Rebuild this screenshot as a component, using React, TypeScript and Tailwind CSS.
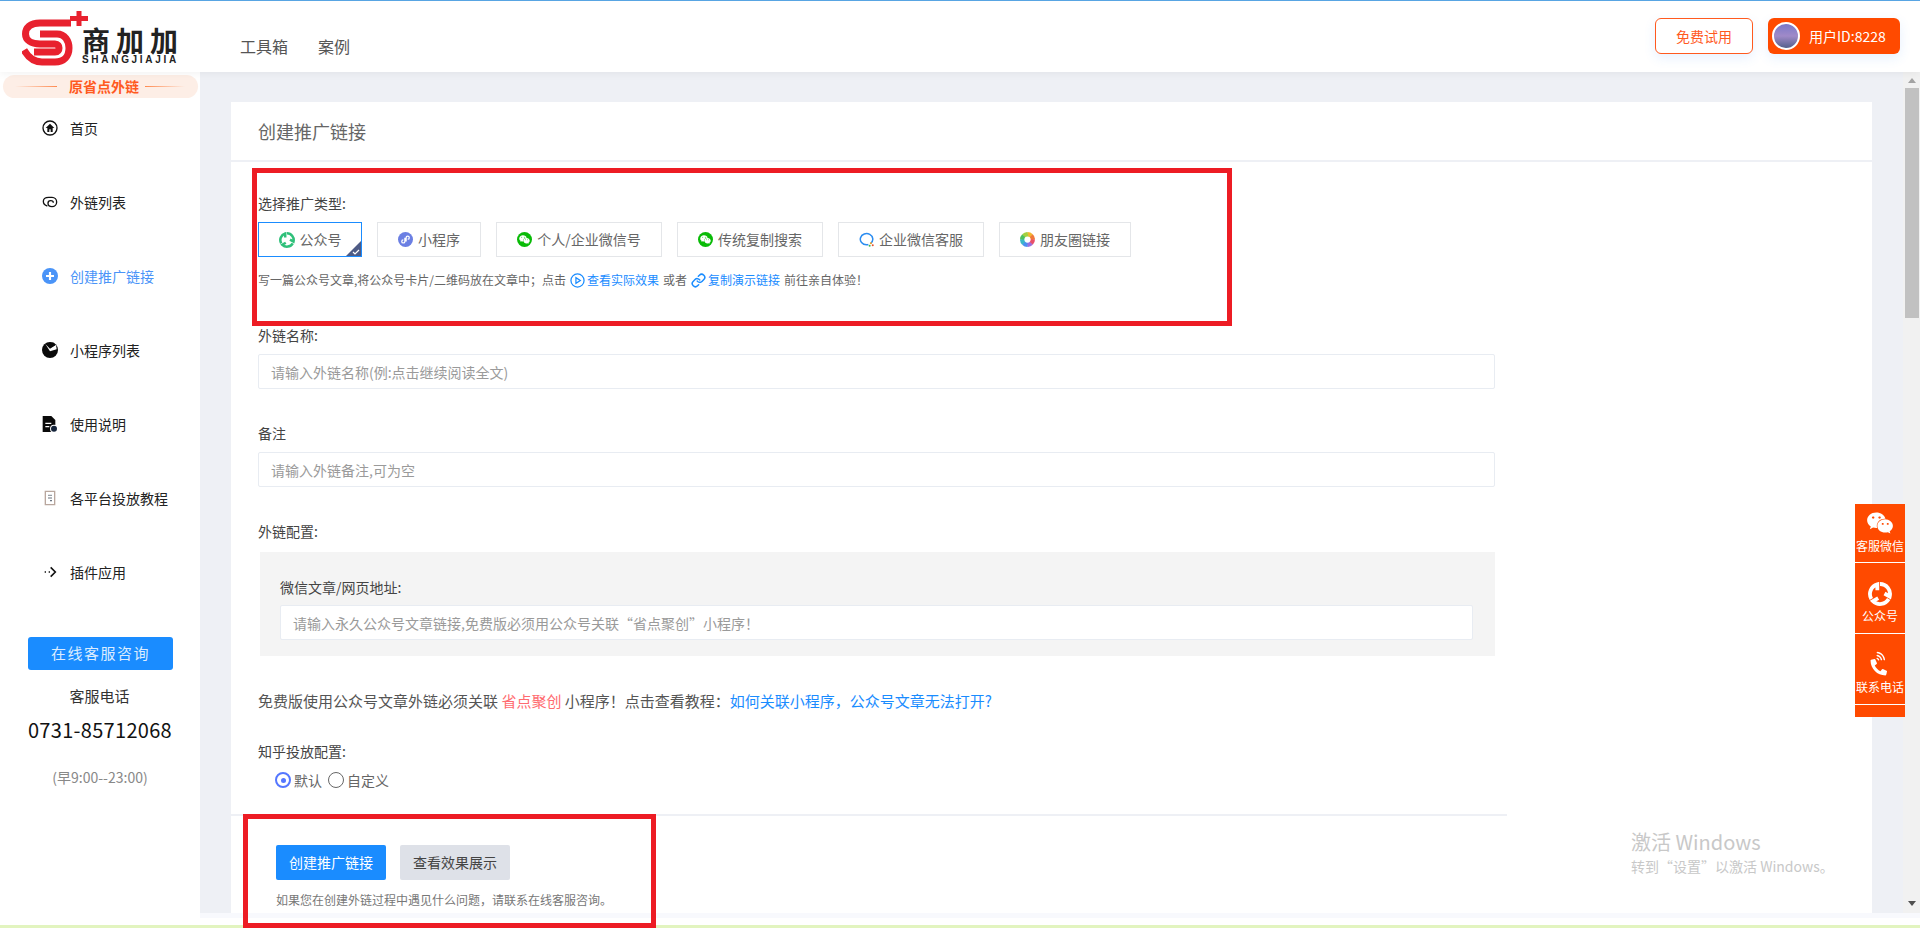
import { Link as LinkIcon } from "lucide-react"
import { FaWeixin, FaPhoneVolume } from "react-icons/fa"

function RingIcon({ color, size = 16 }: { color: string; size?: number }) {
  return (
    <svg width={size} height={size} viewBox="0 0 24 24" fill="none" stroke={color} strokeWidth="3.800">
      {[0, 120, 240].map((r) => (
        <path key={r} d="M12 2A10 10 0 0 1 21.700 14.500L16.500 11.500" transform={`rotate(${r} 12 12)`} />
      ))}
    </svg>
  )
}

function WechatCircle() {
  return (
    <span className="flex h-[15px] w-[15px] items-center justify-center rounded-full bg-[#09bb07]">
      <FaWeixin className="h-[11px] w-[11px] text-white" />
    </span>
  )
}

function MiniIcon() {
  return (
    <svg width="15" height="15" viewBox="0 0 24 24">
      <circle cx="12" cy="12" r="12" fill="#6b7fe3" />
      <path d="M11 9v6a2.500 2.500 0 1 1-2.500-2.500M13 15V9a2.500 2.500 0 1 1 2.500 2.500" fill="none" stroke="#fff" strokeWidth="2" />
    </svg>
  )
}

function QyIcon() {
  return (
    <svg width="15" height="15" viewBox="0 0 24 24" fill="none">
      <path d="M19 18A10 9 0 1 0 12 20.500c1 0 2-.1 3-.4" stroke="#2b8cf0" strokeWidth="2.400" />
      <circle cx="19" cy="18" r="1.600" fill="#f0a020" />
      <circle cx="22" cy="21" r="1.600" fill="#e8502a" />
      <circle cx="17" cy="22" r="1.600" fill="#35b558" />
    </svg>
  )
}

function RainbowIcon() {
  const colors = ["#f2b632", "#f0793a", "#e8506a", "#9a6fe0", "#4a90f0", "#3bb8c8", "#4cc060", "#a4d040"]
  return (
    <svg width="15" height="15" viewBox="0 0 24 24">
      {colors.map((c, i) => (
        <path key={c} d="M12 0A12 12 0 0 1 20.500 3.500L15 12 12 7Z" fill={c} transform={`rotate(${i * 45} 12 12)`} />
      ))}
      <circle cx="12" cy="12" r="5" fill="#fff" />
    </svg>
  )
}

const navIcons = {
  home: (
    <svg width="16" height="16" viewBox="0 0 24 24">
      <circle cx="12" cy="12" r="10.500" fill="none" stroke="#111" strokeWidth="2" />
      <path d="M12 5.500 5.500 12H8v6h3v-4h2v4h3v-6h2.500z" fill="#111" />
    </svg>
  ),
  list: (
    <svg width="16" height="16" viewBox="0 0 24 24" fill="none" stroke="#111" strokeWidth="2">
      <path d="M8 18C4 17 2 14 2 11c0-4 4-6 8-6h5c4 0 7 3 7 7s-3 7-7 7c-4 0-6-2-6-5s2-4 4-4 4 1 4 3" />
    </svg>
  ),
  add: (
    <svg width="16" height="16" viewBox="0 0 24 24">
      <circle cx="12" cy="12" r="12" fill="#4a94f8" />
      <path d="M12 6v12M6 12h12" stroke="#fff" strokeWidth="3.200" />
    </svg>
  ),
  mini: (
    <svg width="16" height="16" viewBox="0 0 24 24">
      <circle cx="12" cy="12" r="12" fill="#0a0a0a" />
      <path d="M5 3l7 7 9-6 1 7-10 3Z" fill="#fff" />
      <path d="M11 1h7l2 4-8 4Z" fill="#0a0a0a" />
    </svg>
  ),
  doc: (
    <svg width="16" height="16" viewBox="0 0 24 24">
      <path d="M1 0h13l6 6v18H1z" fill="#0a0a0a" />
      <path d="M5 11h9M5 16h6" stroke="#fff" strokeWidth="2" />
      <circle cx="18" cy="19" r="6" fill="#fff" />
      <circle cx="18" cy="19" r="4.500" fill="#14233a" />
    </svg>
  ),
  guide: (
    <svg width="16" height="16" viewBox="0 0 24 24" fill="none" stroke="#b9a79e" strokeWidth="2">
      <path d="M5 2h14v20H5z" />
      <path d="M9 8h6M9 12h6" stroke="#9aa0a6" />
      <path d="M12 16h3" stroke="#6a7480" />
    </svg>
  ),
  plugin: (
    <svg width="16" height="16" viewBox="0 0 24 24" fill="none" stroke="#111" strokeWidth="2.400">
      <path d="M13 5l7 7-7 7" />
      <path d="M4 12h2M10 12h2" />
    </svg>
  ),
}

const navItems = [
  { label: "首页", icon: navIcons.home },
  { label: "外链列表", icon: navIcons.list },
  { label: "创建推广链接", icon: navIcons.add, active: true },
  { label: "小程序列表", icon: navIcons.mini },
  { label: "使用说明", icon: navIcons.doc },
  { label: "各平台投放教程", icon: navIcons.guide },
  { label: "插件应用", icon: navIcons.plugin },
]

const typeButtons = [
  { label: "公众号", icon: <RingIcon color="#2fc07a" />, w: "w-[104px]", selected: true },
  { label: "小程序", icon: <MiniIcon />, w: "w-[104px]" },
  { label: "个人/企业微信号", icon: <WechatCircle />, w: "w-[166px]" },
  { label: "传统复制搜索", icon: <WechatCircle />, w: "w-[146px]" },
  { label: "企业微信客服", icon: <QyIcon />, w: "w-[146px]" },
  { label: "朋友圈链接", icon: <RainbowIcon />, w: "w-[132px]" },
]

const inputClass =
  "block h-[35px] w-full rounded-[2px] border border-[#e8ecf2] bg-white px-3 text-[14px] text-[#333] outline-none placeholder:text-[#9a9a9a]"

function FormLabel({ children }: { children: React.ReactNode }) {
  return <div className="h-5 text-[14px] leading-5 text-[#444]">{children}</div>
}

export default function App() {
  return (
    <div className="relative flex h-[928px] w-[1920px] flex-col overflow-hidden bg-white [font-family:'Noto_Sans_CJK_SC','Noto_Sans',sans-serif]">
      <div className="h-px bg-[#5aa7e6]" />

      {/* Top bar */}
      <header className="relative z-10 flex h-[71px] shrink-0 items-start bg-white shadow-[0_2px_8px_rgba(0,0,0,0.05)]">
        <div className="ml-[22px] mt-[7px] flex w-[218px] items-start">
          <svg className="shrink-0" width="66" height="60" viewBox="0 0 66 60" fill="none" stroke="#e8212e" strokeWidth="7">
            <path d="M49 15H18C8 15 3.500 20 3.500 26C3.500 32 9 36 18 36H33C36 36 37 38 37 40C37 42 36 44 33 44H12" />
            <path d="M18 26H35C43 26 47 33 47 40C47 48 42 54 33 54H20C12 54 6 49 2 42" />
            <path d="M48 10.500H66M57 3V18" strokeWidth="5" />
          </svg>
          <div className="-ml-[6px] mt-[18px] w-[100px]">
            <div className="h-[29px] whitespace-nowrap text-[28px] font-bold leading-[29px] tracking-[6px] text-[#222]">商加加</div>
            <div className="h-[10px] whitespace-nowrap text-[10px] font-bold leading-[10px] tracking-[2.700px] text-[#222] [font-family:'Liberation_Sans',sans-serif]">
              SHANGJIAJIA
            </div>
          </div>
        </div>
        <nav className="mt-[35px] flex gap-[30px] text-[16px] leading-5 text-[#555]">
          <span>工具箱</span>
          <span>案例</span>
        </nav>
        <div className="ml-auto mr-[20px] mt-[17px] flex gap-[15px] text-[14px]">
          <span className="flex h-[36px] w-[98px] items-center justify-center rounded-[6px] border border-[#ff5a1f] bg-white text-[#ff5a1f] shadow-[0_4px_12px_rgba(60,140,255,0.12)]">
            免费试用
          </span>
          <span className="flex h-[36px] w-[132px] items-center rounded-[6px] bg-[#ff4a00] pl-1 text-white shadow-[0_4px_12px_rgba(60,140,255,0.12)]">
            <span className="h-7 w-7 rounded-full border-2 border-white bg-gradient-to-b from-[#7a78c8] via-[#a08ac8] to-[#55608c]" />
            <span className="ml-[9px]">用户ID:8228</span>
          </span>
        </div>
      </header>

      <div className="flex h-[853px] shrink-0">
        {/* Sidebar */}
        <aside className="flex w-[200px] shrink-0 flex-col bg-white">
          <div className="ml-[3px] mt-[3px] flex h-[23px] w-[195px] items-center rounded-full bg-[#fdeee6] pl-[12px] text-[14px] font-bold text-[#ff5a1f]">
            <span className="h-px w-[42px] bg-gradient-to-r from-transparent to-[#ff8a50]" />
            <span className="ml-[12px] leading-[23px]">原省点外链</span>
            <span className="ml-[6px] h-px w-[40px] bg-gradient-to-l from-transparent to-[#ff8a50]" />
          </div>
          <nav className="mt-[20px] flex flex-col gap-[54px] pl-[42px] text-[14px]">
            {navItems.map((item) => (
              <div key={item.label} className="flex h-5 items-center gap-[12px]">
                {item.icon}
                <span className={item.active ? "text-[#4a94f8]" : "text-[#222]"}>{item.label}</span>
              </div>
            ))}
          </nav>
          <div className="ml-[28px] mt-[55px] flex h-[33px] w-[145px] items-center justify-center rounded-[3px] bg-[#1a8cff] text-[15px] tracking-[1.500px] text-[#dcecff]">
            在线客服咨询
          </div>
          <div className="-ml-px mt-[16px] h-5 text-center text-[15px] leading-5 text-[#333]">客服电话</div>
          <div className="mt-[10px] h-7 text-center text-[20px] leading-7 tracking-[0.300px] text-[#111]">0731-85712068</div>
          <div className="mt-[23px] h-5 text-center text-[14px] leading-5 text-[#888]">(早9:00--23:00)</div>
        </aside>

        <div className="flex min-w-0 flex-1 flex-col">
          <div className="flex h-[841px] shrink-0">
            <main className="flex-1 bg-[#eef0f5] px-[31px] pt-[30px]">
              <section className="h-[811px] bg-white">
                <div className="h-[60px] border-b-2 border-[#eef0f5] pl-[27px] text-[18px] leading-[58px] text-[#666]">
                  创建推广链接
                </div>
                <div className="pl-[27px] pt-[31px]">
                  <FormLabel>选择推广类型:</FormLabel>
                  <div className="mt-[9px] flex gap-[15px]">
                    {typeButtons.map((b) => (
                      <div
                        key={b.label}
                        className={`relative flex h-[35px] items-center justify-center gap-[5px] border text-[14px] text-[#666] ${b.w} ${
                          b.selected ? "border-[#1a8cff]" : "border-[#e4e6e9]"
                        }`}
                      >
                        {b.icon}
                        {b.label}
                        {b.selected && (
                          <svg className="absolute bottom-0 right-0" width="15" height="15" viewBox="0 0 15 15">
                            <path d="M15 0v15H0z" fill="#4e5b85" />
                            <path d="M7 11l2 2 4-4" stroke="#fff" strokeWidth="1.200" fill="none" />
                          </svg>
                        )}
                      </div>
                    ))}
                  </div>
                  <div className="mt-[13px] flex h-5 items-center text-[12px] text-[#666]">
                    <span>写一篇公众号文章,将公众号卡片/二维码放在文章中；点击</span>
                    <svg className="ml-[4px]" width="15" height="15" viewBox="0 0 24 24" fill="none" stroke="#1a8cff" strokeWidth="2">
                      <circle cx="12" cy="12" r="10.500" />
                      <path d="M9.500 7.500v9l7-4.500z" />
                    </svg>
                    <span className="ml-[2px] text-[#1a8cff]">查看实际效果</span>
                    <span className="ml-1">或者</span>
                    <LinkIcon className="ml-1 h-[15px] w-[15px] text-[#1a8cff]" strokeWidth={2.4} />
                    <span className="ml-[2px] text-[#1a8cff]">复制演示链接</span>
                    <span className="ml-1">前往亲自体验！</span>
                  </div>

                  <div className="w-[1237px]">
                    <div className="mt-[35px]">
                      <FormLabel>外链名称:</FormLabel>
                    </div>
                    <input className={`${inputClass} mt-[9px]`} placeholder="请输入外链名称(例:点击继续阅读全文)" />
                    <div className="mt-[34px]">
                      <FormLabel>备注</FormLabel>
                    </div>
                    <input className={`${inputClass} mt-[9px]`} placeholder="请输入外链备注,可为空" />
                    <div className="mt-[34px]">
                      <FormLabel>外链配置:</FormLabel>
                    </div>
                    <div className="ml-[2px] mt-[11px] h-[104px] bg-[#f4f4f4] pl-[20px] pr-[22px] pt-[25px]">
                      <FormLabel>微信文章/网页地址:</FormLabel>
                      <input
                        className={`${inputClass} mt-2`}
                        placeholder="请输入永久公众号文章链接,免费版必须用公众号关联“省点聚创”小程序！"
                      />
                    </div>
                  </div>

                  <div className="mt-[35px] h-5 text-[15px] leading-5 text-[#555]">
                    免费版使用公众号文章外链必须关联 <span className="text-[#ff6b70]">省点聚创</span> 小程序！点击查看教程：
                    <span className="text-[#1a8cff]">如何关联小程序，公众号文章无法打开?</span>
                  </div>
                  <div className="mt-[30px]">
                    <FormLabel>知乎投放配置:</FormLabel>
                  </div>
                  <div className="ml-[17px] mt-[9px] flex h-5 items-center text-[14px] text-[#666]">
                    <span className="flex h-4 w-4 items-center justify-center rounded-full border-2 border-[#5577ff]">
                      <span className="h-[5px] w-[5px] rounded-full bg-[#5577ff]" />
                    </span>
                    <span className="ml-[3px]">默认</span>
                    <span className="ml-[6px] h-4 w-4 rounded-full border border-[#666]" />
                    <span className="ml-[3px]">自定义</span>
                  </div>
                  <div className="-ml-[27px] mt-[24px] h-[2px] w-[1276px] bg-[#eef0f5]" />
                  <div className="ml-[18px] mt-[29px] flex gap-[14px] text-[14px]">
                    <span className="flex h-[35px] w-[110px] items-center justify-center rounded-[2px] bg-[#1a8cff] text-white">
                      创建推广链接
                    </span>
                    <span className="flex h-[35px] w-[110px] items-center justify-center rounded-[2px] bg-[#dee1e8] text-[#444]">
                      查看效果展示
                    </span>
                  </div>
                  <div className="ml-[18px] mt-[10px] h-5 text-[12px] leading-5 text-[#777]">
                    如果您在创建外链过程中遇见什么问题，请联系在线客服咨询。
                  </div>
                </div>
              </section>
            </main>
            {/* Scrollbar */}
            <div className="flex w-[17px] shrink-0 flex-col items-center bg-[#f1f1f1]">
              <div className="mt-[6px] h-0 w-0 border-x-[4px] border-b-[5px] border-x-transparent border-b-[#a3a3a3]" />
              <div className="mt-[5px] h-[230px] w-[14px] bg-[#c1c1c1]" />
              <div className="mt-auto mb-[7px] h-0 w-0 border-x-[4px] border-t-[5px] border-x-transparent border-t-[#505050]" />
            </div>
          </div>
          <div className="h-[5px] shrink-0 bg-[#f8f9fd]" />
        </div>
      </div>
      <div className="h-[3px] shrink-0 bg-[#e2f4bf]" />

      {/* Floating contact bar */}
      <div className="absolute left-[1855px] top-[504px] flex w-[50px] flex-col gap-px bg-white text-[12px] text-white">
        <div className="flex h-[58px] flex-col items-center gap-[3px] bg-[#ff4a00] pt-[7px]">
          <FaWeixin className="h-[24px] w-[28px]" />
          <span className="leading-4">客服微信</span>
        </div>
        <div className="flex h-[70px] flex-col items-center gap-[2px] bg-[#ff4a00] pt-[19px]">
          <RingIcon color="#fff" size={24} />
          <span className="leading-4">公众号</span>
        </div>
        <div className="flex h-[70px] flex-col items-center gap-[3px] bg-[#ff4a00] pt-[19px]">
          <FaPhoneVolume className="h-[23px] w-[23px] -rotate-45" />
          <span className="leading-4">联系电话</span>
        </div>
        <div className="h-[12px] bg-[#ff4a00]" />
      </div>

      {/* Windows watermark */}
      <div className="pointer-events-none absolute left-[1631px] top-[828px] text-[#c8c8c8]">
        <div className="text-[20px] leading-7">激活 Windows</div>
        <div className="text-[14px] leading-5">转到“设置”以激活 Windows。</div>
      </div>

      {/* Red annotation boxes */}
      <div className="pointer-events-none absolute left-[252px] top-[168px] h-[158px] w-[980px] border-[5px] border-[#ed1c24]" />
      <div className="pointer-events-none absolute left-[243px] top-[814px] h-[114px] w-[413px] border-[5px] border-[#ed1c24]" />
    </div>
  )
}
